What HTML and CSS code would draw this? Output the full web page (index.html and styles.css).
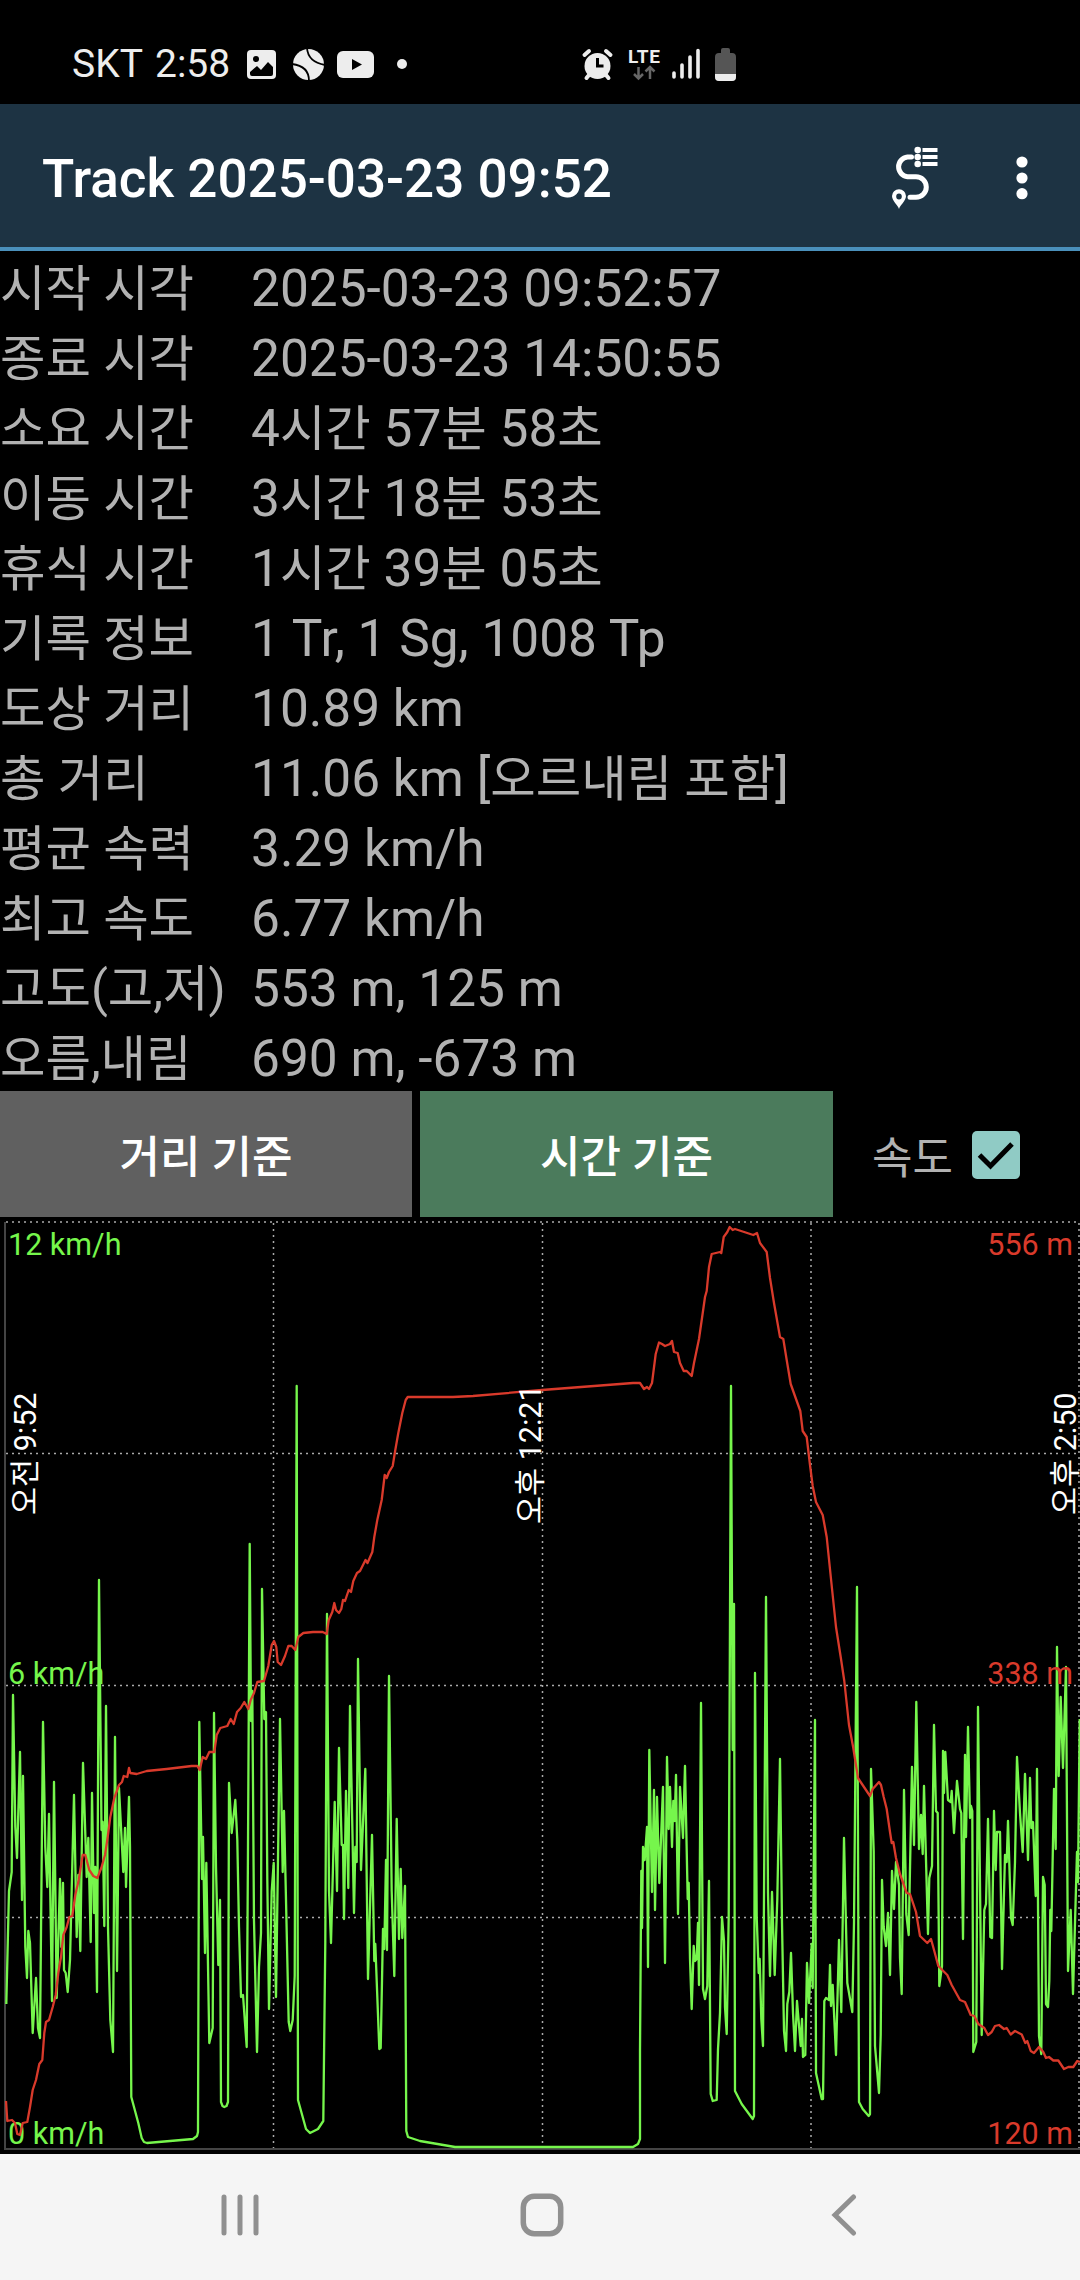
FILE: index.html
```html
<!DOCTYPE html>
<html lang="ko">
<head>
    <meta charset="UTF-8">
    <meta name="viewport" content="width=device-width, initial-scale=1.0">
    <title>Track 2025-03-23 09:52</title>
    <link rel="stylesheet" href="styles.css">
</head>
<body>
    <div class="status-bar">
        <span class="carrier">SKT</span>
        <span class="clock">2:58</span>
        <svg class="status-icons" width="165" height="40" viewBox="245 43 165 40">
            <rect x="247" y="49" width="29" height="29" rx="4" fill="#ededed"/>
            <circle cx="256" cy="58" r="3" fill="#000"/>
            <path d="M250 71l7-6 4 4 7-8 5 5v7q0 2-2 2h-19q-2 0-2-2z" fill="#000"/>
            <circle cx="308.500" cy="63.500" r="15.500" fill="#ededed"/>
            <path d="M307 47q1 14 18 17M292 63q17 2 17 17" fill="none" stroke="#000" stroke-width="1.800"/>
            <rect x="337" y="50" width="37" height="27" rx="6" fill="#ededed"/>
            <path d="M352 58v11l10-5.500z" fill="#000"/>
            <circle cx="402" cy="63" r="5" fill="#ededed"/>
        </svg>
        <svg class="system-icons" width="160" height="40" viewBox="580 43 160 40">
            <circle cx="597.500" cy="65" r="13" fill="#ededed"/>
            <path d="M584.500 54l4.500-4M610.500 54l-4.500-4M589 74l-2.500 3M606 74l2.500 3" stroke="#ededed" stroke-width="4" stroke-linecap="round"/>
            <path d="M597.500 57v8h6" fill="none" stroke="#000" stroke-width="3"/>
            <text x="628" y="61.500" class="lte" textLength="32">LTE</text>
            <path d="M638.500 66v11.500M634 73l4.500 4.500 4.500-4.500M650 78v-12M645.500 70.500l4.500-4.500 4.500 4.500" fill="none" stroke="#666" stroke-width="2.500"/>
            <path d="M674 72v4M682 64v12M690 56v20M698 49.500v26.500" stroke="#ededed" stroke-width="3.600" stroke-linecap="round"/>
            <path d="M721 52v-3q0-2 2-2h5q2 0 2 2v3h2q4 0 4 4v20q0 4-4 4h-13q-4 0-4-4v-20q0-4 4-4z" fill="#555"/>
            <path d="M715 73h21v3q0 4-4 4h-13q-4 0-4-4z" fill="#ededed"/>
        </svg>
    </div>

    <div class="header">
        <h1>Track 2025-03-23 09:52</h1>
        <svg class="route-icon" width="50" height="66" viewBox="890 145 50 66">
            <path d="M911.500 157h-4a9.900 9.900 0 0 0 0 19.700h8.500a10.300 10.300 0 0 1 0 20.600h-6" fill="none" stroke="#fff" stroke-width="5" stroke-linecap="round"/>
            <g fill="#fff">
                <circle cx="917.700" cy="150" r="3.300"/>
                <circle cx="917.700" cy="157" r="3.300"/>
                <circle cx="917.700" cy="164" r="3.300"/>
                <path d="M922.500 148h15v4h-15zM922.500 155h15v4h-15zM922.500 162h15v4h-15z"/>
                <path d="M899 209c-1-4-7-8-7-13a7 6.800 0 0 1 14 0c0 5-6 9-7 13zM899 193.500a2.800 3 0 0 0 0 6 2.800 3 0 0 0 0-6z" fill-rule="evenodd"/>
            </g>
        </svg>
        <svg class="menu-icon" width="14" height="46" viewBox="0 0 14 46" fill="#fff">
            <circle cx="7" cy="7" r="5.600"/>
            <circle cx="7" cy="23" r="5.600"/>
            <circle cx="7" cy="38.700" r="5.600"/>
        </svg>
    </div>

    <div class="details">
        <div class="label">시작 시각</div><div>2025-03-23 09:52:57</div>
        <div class="label">종료 시각</div><div>2025-03-23 14:50:55</div>
        <div class="label">소요 시간</div><div>4<span class="ko">시간</span> 57<span class="ko">분</span> 58<span class="ko">초</span></div>
        <div class="label">이동 시간</div><div>3<span class="ko">시간</span> 18<span class="ko">분</span> 53<span class="ko">초</span></div>
        <div class="label">휴식 시간</div><div>1<span class="ko">시간</span> 39<span class="ko">분</span> 05<span class="ko">초</span></div>
        <div class="label">기록 정보</div><div>1 Tr, 1 Sg, 1008 Tp</div>
        <div class="label">도상 거리</div><div>10.89 km</div>
        <div class="label">총 거리</div><div>11.06 km [<span class="ko">오르내림 포함</span>]</div>
        <div class="label">평균 속력</div><div>3.29 km/h</div>
        <div class="label">최고 속도</div><div>6.77 km/h</div>
        <div class="label">고도(고,저)</div><div>553 m, 125 m</div>
        <div class="label">오름,내림</div><div>690 m, -673 m</div>
    </div>

    <div class="controls">
        <button>거리 기준</button>
        <button class="active">시간 기준</button>
        <div class="checkbox-group">
            <span>속도</span>
            <svg width="48" height="48" viewBox="0 0 48 48">
                <rect width="48" height="48" rx="5" fill="#90cbc5"/>
                <path d="M7.500 24l11 11L40 13" fill="none" stroke="#000" stroke-width="5"/>
            </svg>
        </div>
    </div>

    <svg class="chart" width="1080" height="937" viewBox="0 1217 1080 937">
        <!-- grid -->
        <path class="grid" d="M6 1222H1080M6 1453.500H1080M6 1685.500H1080M6 1917.500H1080M273.500 1223V2148M542.500 1223V2148M811 1223V2148M1079 1223V2148"/>
        <path class="axis" d="M5 1222V2149H1080"/>
        <!-- speed -->
        <polyline class="speed" points="6.3,2004 9,1891 11.7,1872 13,1695 15.3,1827 17,1858 20,1752 22,1900 23,1776 25.3,1947 27,1978 28.3,1931 30,1943 32.7,2033 36,1978 38,2028 40,2038 43,1722 45.3,1847 47.3,1887 49,1814 52,2001 54,1782 56.7,1998 60,1879 61.3,1947 63,1883 64,1970 65.7,1973 67.7,1992 70,1960 74,1795 76.7,1937 78.3,1875 80.3,1951 83,1763 86.7,1877 88.3,1838 90.7,1942 92,1793 94,1913 95.3,1867 97,1992 99,1580 101.500,1830 102.7,1822 104.3,1926 106,1706 108,1927 110.3,2020 113,2052 115,1737 117,1971 119,1788 123.3,1872 125,1828 126,1887 129,1797 130,1847 131.3,2097 138.3,2123 141.7,2138 144,2142 147,2143 193,2139 197,2136 198,2132 199.3,1722 202,1879 203,1837 205,1953 206.3,1863 209.3,2043 212.7,2028 214,1713 216,1867 218.3,1965 220,1900 221,2102 222.500,2106 224.3,2107 226.500,2106 228,2102 229,1783 231.7,1833 235.3,1800 237.3,1840 239,1927 241,1997 243,1995 246.7,2047 248,1847 249.7,1544 251,1721 252.3,1691 254,1921 257,2052 259,1967 261,1933 262,1589 264.3,1719 266,1712 267.3,1879 269,2009 271.7,1891 273.7,1863 276,1997 280,1719 282.7,1872 284,1811 286,1900 288.7,2022 290.3,2031 292.7,2020 294.7,1976 296.7,1386 298,2100 306,2129 310,2133 318,2129 323.3,2121 325.3,1942 327,1614 329,1891 331,1943 334.7,1802 337,1891 339,1748 341.7,1845 343,1845 344,1919 346,1791 348.3,1888 350,1706 354,1913 355.3,1847 356.7,1862 358,1659 361,1870 365.3,1769 368,1979 372,1835 374.3,1961 375.3,1944 379.3,2049 380.7,2048 383,1929 384.3,1949 386,1860 387,1950 389,1676 391.7,1891 394.3,1976 396.7,1819 399,1939 400.7,1869 402.3,1938 405,1886 406.3,2131 408,2137 420,2141 455,2147 633,2147 638,2144 640,2139 640,2051 641.3,1871 642,1928 643,1847 644.7,1860 647,1827 648,1967 649.3,1750 652,1892 654,1790 655,1910 657,1797 659.3,1883 663,1787 665,1963 667,1757 668.7,1829 670,1787 672,1847 673.3,1801 674.7,1821 676,1775 678,1914 680,1787 683,1838 685,1766 687.7,1899 688.7,1883 690,1959 691.7,2009 693.7,1946 695,1961 696.7,1959 698,1923 699,1985 701,1703 703,1989 705,1999 707.3,1986 709,1881 710.7,2094 712.7,2101 716.7,2100 718,2049 720,2013 722,1917 724,1941 725,2007 726.7,2034 728.7,1917 731,1386 732.7,1750 734,1604 735,2091 741.7,2104 752.7,2119 754,2116 755,1673 756.7,1917 758.7,1973 759.7,1959 761.3,2019 763,2046 766,1597 768,1893 770,1976 772,1892 774.7,1975 777.3,1899 780,1759 782,1923 784,2031 786,2051 787.3,2004 789.3,1992 791,1953 793,2013 795,2051 797,2001 800.7,2046 802,2019 803,2057 805.3,2055 807,1963 809,2003 811.7,1944 812.7,1988 815,1720 816,2073 821.7,2099 823,2099 824.3,2001 826,1998 829,2000 830,1965 831,2006 832.7,1985 836,2055 839,1940 841.3,2012 844,1838 847.3,1983 852.3,2012 854,1923 857,1587 859,2102 862.7,2109 868.7,2116 870,2114 871,1769 873.7,1851 875,2046 879,2093 880.7,2035 882,1880 883.7,1927 886,1946 888,1913 890,1975 892,1871 894,1909 896,1862 899,1885 900,1958 901.7,1994 904,1790 906.3,1914 908.7,1935 912,1767 914,1845 916.3,1702 919,1849 921,1815 922.7,1854 924,1786 928,1934 929.3,1878 932,1866 934,1725 936,1811 937.7,1813 939.3,1986 942,1966 943,1751 944,1793 945.3,1752 948,1800 950.7,1802 951.7,1791 954,1833 957,1781 960,1809 961.3,1813 963,1939 965,1755 966,1837 968,1727 970,1818 971,1806 972.3,1811 973.3,2052 976.3,2042 978,1707 981.7,2035 984.3,1910 986,1904 988,1819 990.3,1937 992,1938 994,1811 995.7,1870 997,1832 1000,1832 1002,1969 1005,1855 1006.7,1862 1008,1821 1011,1918 1012.7,1925 1015,1862 1017,1757 1020,1813 1022.7,1852 1025,1774 1028,1860 1030,1778 1031.3,1828 1033,1822 1035.7,1896 1037,1769 1039,2036 1041.3,2054 1043,1877 1044.7,1885 1046,2004 1048,2007 1049.3,1981 1050.3,1910 1051.3,1931 1054,1789 1055.7,1849 1057,1647 1058.7,1776 1060.7,1697 1063,1768 1066,1667 1068,1971 1070.7,1910 1073,1994 1077,1852 1078,1882 1079.7,1719"/>
        <g class="speed-text">
            <text x="8" y="1255">12 km/h</text>
            <text x="8" y="1684">6 km/h</text>
            <text x="8" y="2143.500">0 km/h</text>
        </g>
        <!-- altitude -->
        <polyline class="altitude" points="6,2101 7.3,2121 12,2120 15,2123 17.3,2134 20,2135 22.7,2123 27.3,2122 30,2107 32.7,2090 36,2080 39.3,2064 42.3,2060 44.3,2033 46,2022 49,2020 52.7,2007 55.7,1995 58.3,1973 61,1957 63.3,1935 66.7,1927 69.3,1917 72.3,1916 75.3,1895 78.7,1880 82.7,1855 85.3,1855 89.3,1870 93.3,1876 97.3,1878 101.3,1868 105,1855 107.7,1837 110.3,1817 114.3,1798 119,1785 122,1782 123.7,1776 127.3,1777 129,1768 130.3,1773 136.7,1774 146.7,1771 166.7,1769 191.7,1766 197.3,1766 199.7,1770 202.7,1757 206,1759 209.3,1752 214.3,1752 216.7,1735 220.3,1728 227.3,1726 230.7,1719 233.7,1724 237,1712 240.7,1708 244.3,1702 248.3,1709 250.7,1700 254,1693 257.3,1682 264,1681 268.3,1666 271.7,1645 274,1641 276.3,1647 277.7,1662 281,1665 285,1656 288.3,1646 291.7,1646 295.3,1650 298.3,1637 303.3,1633 313,1632 322.7,1632 326.7,1634 328.7,1620 332.3,1612 334.3,1603 336,1610 339,1613 341.3,1609 343,1600 345,1601 348.7,1590 351,1592 353.3,1581 357,1573 360,1571 365.500,1560 367.500,1563 372.3,1552 374.3,1537 377.3,1520 381.7,1500 384.7,1475 386.7,1478 389,1472 392.7,1466 395.3,1450 398.3,1433 402.3,1413 405.7,1400 407.7,1397 453,1397 473,1396 542,1390 633,1383 640,1383 644,1389 647,1387 649,1389 652,1383 655.7,1354 659,1342.500 662,1344 665,1346 670,1344 672,1341 674,1352 677.7,1353 680,1363 683.7,1371 686.7,1371 691.7,1376 694,1363 699,1339 703.3,1309 705,1297 706.7,1291 709,1267 711.7,1254 720,1252 721.3,1253 723.7,1237 727.3,1232 729.7,1227 732.7,1230 735,1229 753.3,1235 757,1233 760,1243 766.7,1252 770,1278 774,1303 780,1337 783.3,1339 786.7,1360 790.7,1384 795.3,1397 800.3,1411 802.7,1431 806.7,1437 810,1465 812.7,1486 816,1502 822.7,1515 826.7,1537 831,1579 836,1627 840.7,1657 844.3,1681 849,1725 853.3,1748 858,1778 863.3,1786 870,1796 872.7,1789 879,1782 881,1785 883.7,1797 886.7,1809 890,1832 891.7,1843 893.3,1842 896,1858 900,1874 906.7,1893 910,1894 916,1912 920,1936 927.3,1943 931,1939 934.3,1951 938.3,1966 947.3,1975 951.7,1985 960,2000 965,2002 970.7,2015 974.3,2016 978.3,2024 984.3,2028 988,2035 991.7,2032 995,2026 999,2025 1004,2029 1006.7,2028 1010.7,2034.500 1015,2031 1021.7,2034.500 1025.3,2043 1027.3,2041 1030.7,2051 1034,2053 1039,2047 1043.3,2052 1046,2058 1049,2057 1053.3,2060.500 1058.3,2060.500 1064,2069 1068.3,2067 1073.3,2067 1077.3,2061 1080,2062"/>
        <g class="altitude-text">
            <text x="1073" y="1255">556 m</text>
            <text x="1073" y="1684">338 m</text>
            <text x="1073" y="2143.500">120 m</text>
        </g>
        <!-- time -->
        <g class="time-text">
            <text transform="translate(36 1515) rotate(-90)">오전 9:52</text>
            <text transform="translate(540.500 1524) rotate(-90)">오후 12:21</text>
            <text transform="translate(1076 1515) rotate(-90)">오후 2:50</text>
        </g>
    </svg>

    <div class="nav-bar">
        <svg width="38" height="44" viewBox="0 0 38 44"><path d="M3 4v36M19 4v36M35 4v36" stroke="#909090" stroke-width="5" stroke-linecap="round"/></svg>
        <svg width="44" height="44" viewBox="0 0 44 44"><rect x="3.300" y="3.300" width="37.400" height="37.400" rx="11" fill="none" stroke="#909090" stroke-width="5.500"/></svg>
        <svg width="26" height="44" viewBox="0 0 26 44"><path d="M22.500 4L4 22l18.500 18" fill="none" stroke="#909090" stroke-width="5" stroke-linecap="round"/></svg>
    </div>
</body>
</html>
```
FILE: styles.css
```css
body {
    margin: 0;
    width: 1080px;
    height: 2280px;
    background-color: #000;
    color: #b2b2b2;
    font-family: Roboto, "Noto Sans CJK KR", sans-serif;
    display: flex;
    flex-direction: column;
    overflow: hidden;
}
svg {
    display: block;
    flex-shrink: 0;
}
.status-bar {
    box-sizing: border-box;
    height: 104px;
    padding: 23px 0 0 72px;
    display: flex;
    align-items: center;
    color: #ededed;
    font-size: 39px;
}
.carrier {
    width: 83px;
}
.clock {
    width: 90px;
}
.system-icons {
    margin-left: 170px;
}
.lte {
    font-size: 19px;
    font-weight: 700;
    fill: #ededed;
}
.header {
    box-sizing: border-box;
    height: 147px;
    padding-left: 42px;
    display: flex;
    align-items: center;
    background-color: #1d3343;
    border-bottom: 4px solid #4a90bb;
}
h1 {
    margin: 7px 0 0;
    width: 848px;
    font-size: 53px;
    font-weight: 500;
    color: #fff;
}
.route-icon {
    margin-top: 4px;
}
.menu-icon {
    margin: 4px 0 0 75px;
}
.details {
    box-sizing: border-box;
    height: 840px;
    padding-top: 3px;
    display: grid;
    grid-template-columns: 251px 1fr;
    grid-auto-rows: 70px;
    font-size: 51.4px;
    line-height: 70px;
    white-space: nowrap;
}
.label, .ko {
    font-size: 49.4px;
}
.controls {
    height: 126px;
    display: flex;
    gap: 8px;
}
button {
    width: 412px;
    padding: 0;
    border: none;
    background-color: #606060;
    color: #fff;
    font-family: inherit;
    font-size: 44px;
    font-weight: 500;
}
button.active {
    width: 413px;
    background-color: #4b7b5c;
}
.checkbox-group {
    display: flex;
    align-items: center;
    gap: 19px;
    padding: 2px 0 0 31px;
    font-size: 44px;
}
.chart {
    font-size: 30.5px;
}
.grid {
    fill: none;
    stroke: #aaa;
    stroke-width: 1.5;
    stroke-dasharray: 2 4;
}
.axis {
    fill: none;
    stroke: #444;
    stroke-width: 2;
}
.speed, .altitude {
    fill: none;
    stroke-width: 2.3;
    stroke-linejoin: round;
}
.speed {
    stroke: #76f64c;
}
.altitude {
    stroke: #d93a2b;
}
.speed-text {
    fill: #76f64c;
}
.altitude-text {
    fill: #d93a2b;
    text-anchor: end;
}
.time-text {
    fill: #fff;
}
.nav-bar {
    height: 126px;
    display: flex;
    align-items: center;
    background-color: #f5f5f5;
}
.nav-bar svg {
    margin: -4px 0 0 221px;
}
.nav-bar svg + svg {
    margin-left: 261px;
}
.nav-bar svg:last-child {
    margin-left: 267px;
}
```
